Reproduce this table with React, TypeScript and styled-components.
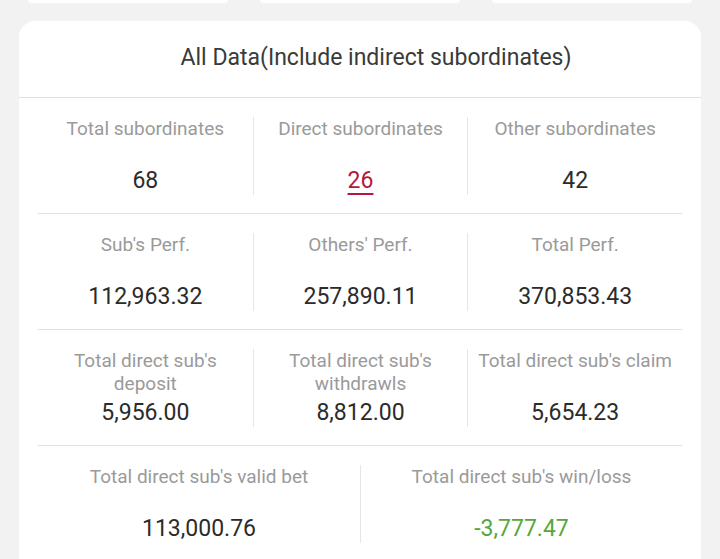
import React from "react";
import styled, { createGlobalStyle } from "styled-components";

const Global = createGlobalStyle`
  html, body { margin: 0; padding: 0; background: #f2f2f2; }
  body { font-family: Roboto, "Noto Sans", Arial, sans-serif; }
`;

const Page = styled.div`
  width: 720px;
  height: 559px;
  overflow: hidden;
  background: #f2f2f2;
`;

const TopRow = styled.div`
  display: flex;
  gap: 32px;
  padding: 0 28px 0 28px;
`;

const TopCard = styled.div`
  flex: 0 0 200px;
  height: 3px;
  background: #ffffff;
  border-radius: 0 0 8px 8px;
`;

const Card = styled.div`
  margin: 18px 19px 0 19px;
  background: #ffffff;
  border-radius: 16px;
  padding-bottom: 16px;
`;

const Title = styled.div`
  height: 77px;
  box-sizing: border-box;
  display: flex;
  align-items: center;
  justify-content: center;
  font-size: 23px;
  color: #3a3a3a;
  border-bottom: 1px solid #e0e0e0;
  padding: 0 0 3px 32px;
`;

const Grid = styled.div`
  padding: 0 19px;
`;

const Row = styled.div<{ $cols: number; $last?: boolean }>`
  display: grid;
  grid-template-columns: repeat(${(p) => p.$cols}, 1fr);
  border-bottom: ${(p) => (p.$last ? "none" : "1px solid #e0e0e0")};
  padding: 19px 0 18px 0;
`;

const Cell = styled.div`
  height: 78px;
  display: flex;
  flex-direction: column;
  justify-content: space-between;
  align-items: center;
  text-align: center;
  border-left: 1px solid #e6e6e6;
  &:first-child { border-left: none; }
`;

const Label = styled.div`
  font-size: 19px;
  line-height: 23px;
  color: #9a9a9a;
  padding: 0 4px;
`;

const Value = styled.div<{ $tone?: "red" | "green" }>`
  font-size: 23px;
  line-height: 28px;
  color: ${(p) => (p.$tone === "red" ? "#b5173b" : p.$tone === "green" ? "#55a83a" : "#2b2b2b")};
  text-decoration: ${(p) => (p.$tone === "red" ? "underline" : "none")};
  text-decoration-thickness: 2px;
  text-underline-offset: 5px;
`;

type Item = { label: string; value: string; tone?: "red" | "green" };

const rows: Item[][] = [
  [
    { label: "Total subordinates", value: "68" },
    { label: "Direct subordinates", value: "26", tone: "red" },
    { label: "Other subordinates", value: "42" },
  ],
  [
    { label: "Sub's Perf.", value: "112,963.32" },
    { label: "Others' Perf.", value: "257,890.11" },
    { label: "Total Perf.", value: "370,853.43" },
  ],
  [
    { label: "Total direct sub's deposit", value: "5,956.00" },
    { label: "Total direct sub's withdrawls", value: "8,812.00" },
    { label: "Total direct sub's claim", value: "5,654.23" },
  ],
  [
    { label: "Total direct sub's valid bet", value: "113,000.76" },
    { label: "Total direct sub's win/loss", value: "-3,777.47", tone: "green" },
  ],
];

export default function App() {
  return (
    <Page>
      <Global />
      <TopRow>
        <TopCard />
        <TopCard />
        <TopCard />
      </TopRow>
      <Card>
        <Title>All Data(Include indirect subordinates)</Title>
        <Grid>
          {rows.map((r, i) => (
            <Row key={i} $cols={r.length} $last={i === rows.length - 1}>
              {r.map((it) => (
                <Cell key={it.label}>
                  <Label>{it.label}</Label>
                  <Value $tone={it.tone}>{it.value}</Value>
                </Cell>
              ))}
            </Row>
          ))}
        </Grid>
      </Card>
    </Page>
  );
}
